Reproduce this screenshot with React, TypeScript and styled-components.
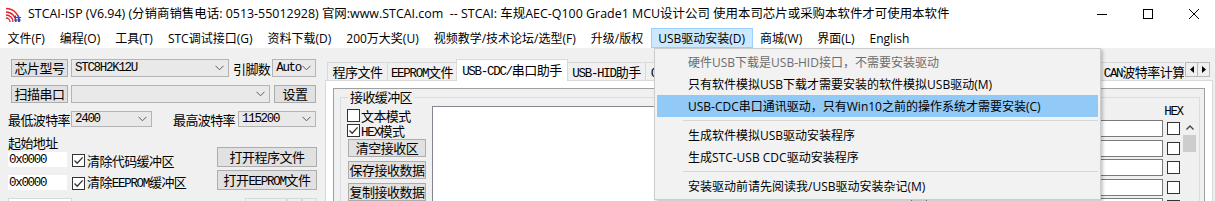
import * as React from "react";
import styled, { createGlobalStyle } from "styled-components";

const UI_FONT = `"Open Sans", "Noto Sans CJK SC", sans-serif`;
const CJK_FONT = `"Noto Sans CJK SC", sans-serif`;
const MONO_FONT = `"Liberation Mono", "Noto Sans CJK SC", monospace`;

const GlobalStyle = createGlobalStyle`
	html, body {
		margin: 0;
		padding: 0;
		background: #f0f0f0;
	}

	body {
		font-family: ${UI_FONT};
		font-size: 12px;
		color: #000;
	}

	* {
		box-sizing: border-box;
	}
`;

const Window = styled.div`
	position: relative;
	width: 1215px;
	height: 201px;
	overflow: hidden;
	display: flex;
	flex-direction: column;
	background: #f0f0f0;
`;

/* ---------- title bar ---------- */

const TitleBar = styled.div`
	flex: none;
	height: 28px;
	display: flex;
	align-items: center;
	background: #fff;
`;

const AppIcon = styled.svg`
	flex: none;
	margin-left: 6px;
	width: 15px;
	height: 15px;
`;

const TitleText = styled.div`
	flex: 1;
	margin-left: 7px;
	white-space: pre;
	font-size: 12.45px;
	line-height: 16px;
`;

const WinControls = styled.div`
	display: flex;
	height: 100%;
	margin-right: -2px;
`;

const WinButton = styled.div`
	width: 46px;
	display: flex;
	align-items: center;
	justify-content: center;
`;

/* ---------- menu bar ---------- */

const MenuBar = styled.div`
	flex: none;
	height: 20px;
	display: flex;
	background: #fff;
`;

const MenuBarItem = styled.div<{ $active?: boolean }>`
	display: flex;
	align-items: center;
	padding: 0 6.5px;
	border: 1px solid ${(p) => (p.$active ? "#99d1ff" : "transparent")};
	background: ${(p) => (p.$active ? "#cce8ff" : "transparent")};
	white-space: nowrap;
	font-size: 12px;
`;

/* ---------- body ---------- */

const Body = styled.div`
	flex: 1;
	display: flex;
	min-height: 0;
`;

const LeftPanel = styled.div`
	width: 325px;
	flex: none;
	display: flex;
	flex-direction: column;
	padding-top: 11px;
`;

const Row = styled.div<{ $h: number; $top: number; $left?: number; $bottom?: boolean }>`
	display: flex;
	align-items: ${(p) => (p.$bottom ? "flex-end" : "center")};
	flex: none;
	width: 317px;
	height: ${(p) => p.$h}px;
	margin-top: ${(p) => p.$top}px;
	padding-left: ${(p) => p.$left ?? 8}px;
`;

const PushButton = styled.div<{ $w: number; $h?: number; $ml?: number; $mt?: number; $push?: boolean }>`
	flex: none;
	width: ${(p) => p.$w}px;
	height: ${(p) => p.$h ?? 18}px;
	margin-left: ${(p) => (p.$push ? "auto" : `${p.$ml ?? 0}px`)};
	margin-top: ${(p) => p.$mt ?? 0}px;
	border: 1px solid #adadad;
	background: #e1e1e1;
	font-family: ${CJK_FONT};
	font-size: 13px;
	letter-spacing: -0.5px;
	line-height: ${(p) => (p.$h ?? 18) - 2}px;
	text-align: center;
	white-space: nowrap;
	overflow: hidden;
`;

const Combo = styled.div<{ $w: number; $h?: number; $ml?: number }>`
	flex: none;
	width: ${(p) => p.$w}px;
	height: ${(p) => p.$h ?? 18}px;
	margin-left: ${(p) => p.$ml ?? 0}px;
	display: flex;
	align-items: center;
	justify-content: space-between;
	padding: 0 4px 0 3px;
	border: 1px solid #b4b4b4;
	background: #e9e9e9;
`;

const Mono = styled.span`
	font-family: ${MONO_FONT};
	font-size: 12.5px;
	letter-spacing: -1.3px;
	white-space: pre;
`;

const FieldLabel = styled.span<{ $w?: number; $ml?: number }>`
	flex: none;
	width: ${(p) => (p.$w ? `${p.$w}px` : "auto")};
	margin-left: ${(p) => p.$ml ?? 0}px;
	font-family: ${CJK_FONT};
	font-size: 13px;
	letter-spacing: -0.6px;
	white-space: nowrap;
	line-height: 1;
`;

const AddrInput = styled.div`
	flex: none;
	width: 59px;
	height: 15px;
	display: flex;
	align-items: center;
	padding-left: 1px;
	background: #fff;
`;

const CheckBox = styled.span<{ $ml?: number }>`
	flex: none;
	width: 13px;
	height: 13px;
	margin-left: ${(p) => p.$ml ?? 0}px;
	display: inline-flex;
	align-items: center;
	justify-content: center;
	border: 1px solid #333;
	background: #fff;
`;

const LowerTab = styled.div<{ $w: number; $ml?: number; $white?: boolean }>`
	flex: none;
	align-self: flex-start;
	width: ${(p) => p.$w}px;
	height: 14px;
	margin-left: ${(p) => p.$ml ?? 0}px;
	padding-top: 2px;
	border: 1px solid #d9d9d9;
	border-bottom: none;
	background: ${(p) => (p.$white ? "#fff" : "#f0f0f0")};
	font-family: ${CJK_FONT};
	font-size: 13px;
	text-align: center;
`;

/* ---------- tab area ---------- */

const TabArea = styled.div`
	flex: 1;
	display: flex;
	flex-direction: column;
	margin-right: 2px;
	padding-top: 11px;
	min-width: 0;
`;

const TabStrip = styled.div`
	flex: none;
	position: relative;
	z-index: 1;
	height: 22px;
	margin-bottom: -1px;
	display: flex;
	padding-left: 2px;
`;

const TabList = styled.div`
	flex: 1;
	min-width: 0;
	display: flex;
	align-items: flex-end;
	overflow: hidden;
`;

const Tab = styled.div<{ $w: number; $active?: boolean }>`
	flex: none;
	position: relative;
	z-index: ${(p) => (p.$active ? 2 : 1)};
	width: ${(p) => p.$w}px;
	height: ${(p) => (p.$active ? 22 : 19)}px;
	margin-left: ${(p) => (p.$active ? -1 : 0)}px;
	display: flex;
	align-items: center;
	justify-content: center;
	padding-bottom: ${(p) => (p.$active ? 3 : 0)}px;
	border: 1px solid #d9d9d9;
	border-left-width: ${(p) => (p.$active ? 1 : 0)}px;
	border-bottom: ${(p) => (p.$active ? "none" : "1px solid #d9d9d9")};
	background: ${(p) => (p.$active ? "#fff" : "#f0f0f0")};
	font-family: ${CJK_FONT};
	font-size: 13px;
	letter-spacing: -0.5px;
	white-space: nowrap;
	overflow: hidden;

	&:first-child {
		border-left-width: 1px;
	}
`;

const TabScroll = styled.div`
	flex: none;
	align-self: flex-start;
	display: flex;
	margin: 3px 3px 0 1px;
`;

const ScrollArrow = styled.div`
	width: 13px;
	height: 15px;
	display: flex;
	align-items: center;
	justify-content: center;
	border: 1px solid #b8b8b8;
	background: #f0f0f0;

	& + & {
		margin-left: -1px;
	}
`;

const TabPage = styled.div`
	flex: 1;
	min-height: 0;
	display: flex;
	flex-direction: column;
	padding: 7px 7px 0 7px;
	border: 1px solid #d9d9d9;
	border-bottom: none;
	background: #fff;
`;

const InnerPanel = styled.div`
	flex: 1;
	display: flex;
	flex-direction: column;
	padding: 1px 4px 0 6px;
	border: 1px solid #a0a0a0;
	border-bottom: none;
	background: #f0f0f0;
`;

const GroupBox = styled.fieldset`
	flex: 1;
	margin: 0;
	min-width: 0;
	padding: 0 3px 0 6px;
	border: 1px solid #dcdcdc;
	border-bottom: none;
	display: flex;

	legend {
		margin-left: 1px;
		padding: 0 2px;
		font-family: ${CJK_FONT};
		font-size: 13px;
		letter-spacing: -0.6px;
		line-height: 14px;
	}
`;

const RecvColumn = styled.div`
	flex: none;
	width: 80px;
	display: flex;
	flex-direction: column;
	padding-top: 4px;
`;

const CheckRow = styled.div`
	height: 15px;
	display: flex;
	align-items: center;
	gap: 1px;
	font-family: ${CJK_FONT};
	font-size: 13px;
	letter-spacing: -0.6px;
	white-space: nowrap;
`;

const RecvArea = styled.div`
	flex: 1;
	margin: 2px 0 0 5px;
	border: 1px solid #828790;
	border-bottom: none;
	background: #fff;
`;

const SendColumn = styled.div`
	flex: none;
	width: 270px;
	margin-left: 14px;
	display: flex;
`;

const SendInputs = styled.div`
	flex: 1;
	display: flex;
	flex-direction: column;
	gap: 2.5px;
	padding-top: 16px;
`;

const SendInput = styled.div`
	flex: none;
	height: 17px;
	border: 1px solid #7a7a7a;
	background: #fff;
`;

const HexColumn = styled.div`
	flex: none;
	width: 13px;
	margin-left: 4px;
	display: flex;
	flex-direction: column;
	align-items: center;
	gap: 6.5px;
`;

const HexHead = styled.div`
	height: 16px;
	margin-bottom: -4.5px;
	display: flex;
	align-items: center;
	font-family: ${MONO_FONT};
	font-size: 12.5px;
	letter-spacing: -1.4px;
`;

const ScrollBar = styled.div`
	flex: none;
	width: 13px;
	margin: 16px 0 0 3px;
	display: flex;
	flex-direction: column;
	align-items: center;
	background: #f0f0f0;
`;

const ScrollUp = styled.div`
	height: 15px;
	display: flex;
	align-items: center;
	justify-content: center;
`;

const ScrollThumb = styled.div`
	width: 13px;
	height: 17px;
	background: #cdcdcd;
`;

/* ---------- dropdown menu ---------- */

const Dropdown = styled.div`
	position: absolute;
	left: 654px;
	top: 48px;
	z-index: 10;
	width: 447px;
	padding: 2px;
	border: 1px solid #cccccc;
	background: #f2f2f2;
	box-shadow: 2px 2px 3px rgba(0, 0, 0, 0.22);
`;

const DropItem = styled.div<{ $hot?: boolean; $disabled?: boolean }>`
	height: 22px;
	display: flex;
	align-items: center;
	padding-left: 31px;
	background: ${(p) => (p.$hot ? "#91c9f7" : "transparent")};
	color: ${(p) => (p.$disabled ? "#6d6d6d" : "#000")};
	white-space: nowrap;
	font-size: 12px;
`;

const DropSeparator = styled.div`
	height: 7px;
	display: flex;
	align-items: center;
	padding-left: 26px;

	&::after {
		content: "";
		flex: 1;
		height: 1px;
		background: #d7d7d7;
	}
`;

/* ---------- small drawings ---------- */

const Chevron = () => (
	<svg width="9" height="6" viewBox="0 0 9 6">
		<path d="M0.5 0.8 L4.5 4.8 L8.5 0.8" fill="none" stroke="#5a5a5a" strokeWidth="1" />
	</svg>
);

const Tick = () => (
	<svg width="11" height="11" viewBox="0 0 11 11">
		<path d="M1.5 5.5 L4.2 8.2 L9.6 2.4" fill="none" stroke="#333" strokeWidth="1.3" />
	</svg>
);

const Box = ({ checked, ml }: { checked?: boolean; ml?: number }) => (
	<CheckBox $ml={ml}>{checked ? <Tick /> : null}</CheckBox>
);

const menuBarItems = [
	"文件(F)",
	"编程(O)",
	"工具(T)",
	"STC调试接口(G)",
	"资料下载(D)",
	"200万大奖(U)",
	"视频教学/技术论坛/选型(F)",
	"升级/版权",
	"USB驱动安装(D)",
	"商城(W)",
	"界面(L)",
	"English",
];

// tabs hidden behind the open menu are kept as empty boxes
const tabs: { label?: React.ReactNode; w: number; active?: boolean }[] = [
	{ label: "程序文件", w: 61 },
	{ label: <><Mono>EEPROM</Mono>文件</>, w: 69 },
	{ label: <><Mono>USB-CDC/</Mono>串口助手</>, w: 112, active: true },
	{ label: <><Mono>USB-HID</Mono>助手</>, w: 78 },
	{ label: <><Mono>CAN-ISP</Mono>下载</>, w: 79 },
	{ w: 88 },
	{ w: 66 },
	{ w: 100 },
	{ w: 122 },
	{ label: <><Mono>CAN</Mono>波特率计算器</>, w: 100 },
];

const App = (): JSX.Element => (
	<Window>
		<GlobalStyle />
		<TitleBar>
			<AppIcon viewBox="0 0 15 15">
				<path d="M10 15 A10 10 0 0 0 0 5" fill="none" stroke="#e5232c" strokeWidth="1.4" />
				<path d="M7 15 A7 7 0 0 0 0 8" fill="none" stroke="#e5232c" strokeWidth="1.4" />
				<path d="M13.5 15 A13.5 13.5 0 0 0 0 1.5" fill="none" stroke="#e5232c" strokeWidth="1.4" />
				<path d="M4 15 A4 4 0 0 0 0 11" fill="none" stroke="#e5232c" strokeWidth="1.4" />
				<path d="M8 10.5 H15 M8 13 H15 M9.5 8.5 V15 M12.5 8.5 V15" stroke="#2b4fc6" strokeWidth="1.2" />
			</AppIcon>
			<TitleText>
				{"STCAI-ISP (V6.94) (分销商销售电话: 0513-55012928) 官网:www.STCAI.com  -- STCAI: 车规AEC-Q100 Grade1 MCU设计公司 使用本司芯片或采购本软件才可使用本软件"}
			</TitleText>
			<WinControls>
				<WinButton>
					<svg width="10" height="10" viewBox="0 0 10 10">
						<path d="M0 5.5 H10" stroke="#000" strokeWidth="1" />
					</svg>
				</WinButton>
				<WinButton>
					<svg width="10" height="10" viewBox="0 0 10 10">
						<rect x="0.5" y="0.5" width="9" height="9" fill="none" stroke="#000" strokeWidth="1" />
					</svg>
				</WinButton>
				<WinButton>
					<svg width="10" height="10" viewBox="0 0 10 10">
						<path d="M0 0 L10 10 M10 0 L0 10" stroke="#000" strokeWidth="1" />
					</svg>
				</WinButton>
			</WinControls>
		</TitleBar>

		<MenuBar>
			{menuBarItems.map((item) => (
				<MenuBarItem key={item} $active={item === "USB驱动安装(D)"}>
					{item}
				</MenuBarItem>
			))}
		</MenuBar>

		<Body>
			<LeftPanel>
				<Row $h={18} $top={0} $left={11}>
					<PushButton $w={57}>芯片型号</PushButton>
					<Combo $w={158} $ml={3}>
						<Mono>STC8H2K12U</Mono>
						<Chevron />
					</Combo>
					<FieldLabel $ml={4}>引脚数</FieldLabel>
					<Combo $w={44} $ml={2}>
						<Mono>Auto</Mono>
						<Chevron />
					</Combo>
				</Row>
				<Row $h={18} $top={8} $left={11}>
					<PushButton $w={57}>扫描串口</PushButton>
					<Combo $w={199} $ml={3}>
						<span />
						<Chevron />
					</Combo>
					<PushButton $w={42} $ml={4}>设置</PushButton>
				</Row>
				<Row $h={16} $top={8}>
					<FieldLabel $w={63}>最低波特率</FieldLabel>
					<Combo $w={81} $h={16}>
						<Mono>2400</Mono>
						<Chevron />
					</Combo>
					<FieldLabel $w={65} $ml={21}>最高波特率</FieldLabel>
					<Combo $w={78} $h={16}>
						<Mono>115200</Mono>
						<Chevron />
					</Combo>
				</Row>
				<Row $h={14} $top={8}>
					<FieldLabel>起始地址</FieldLabel>
				</Row>
				<Row $h={20} $top={-2} $bottom>
					<AddrInput>
						<Mono>0x0000</Mono>
					</AddrInput>
					<Box checked ml={5} />
					<FieldLabel $ml={2}>清除代码缓冲区</FieldLabel>
					<PushButton $w={100} $h={20} $push>
						打开程序文件
					</PushButton>
				</Row>
				<Row $h={20} $top={3} $bottom>
					<AddrInput>
						<Mono>0x0000</Mono>
					</AddrInput>
					<Box checked ml={5} />
					<FieldLabel $ml={2}>
						清除<Mono>EEPROM</Mono>缓冲区
					</FieldLabel>
					<PushButton $w={100} $h={20} $push>
						打开<Mono>EEPROM</Mono>文件
					</PushButton>
				</Row>
				<Row $h={14} $top={8}>
					<LowerTab $w={64} $white>
						硬件选项
					</LowerTab>
					<LowerTab $w={42} $ml={173}>
						脱机
					</LowerTab>
					<LowerTab $w={15}> </LowerTab>
					<LowerTab $w={15}> </LowerTab>
				</Row>
			</LeftPanel>

			<TabArea>
				<TabStrip>
					<TabList>
						{tabs.map((t, i) => (
							<Tab key={i} $w={t.w} $active={t.active}>
								<span>{t.label}</span>
							</Tab>
						))}
					</TabList>
					<TabScroll>
						<ScrollArrow>
							<svg width="4" height="7" viewBox="0 0 4 7">
								<path d="M4 0 L0 3.5 L4 7 Z" fill="#000" />
							</svg>
						</ScrollArrow>
						<ScrollArrow>
							<svg width="4" height="7" viewBox="0 0 4 7">
								<path d="M0 0 L4 3.5 L0 7 Z" fill="#000" />
							</svg>
						</ScrollArrow>
					</TabScroll>
				</TabStrip>
				<TabPage>
					<InnerPanel>
						<GroupBox>
							<legend>接收缓冲区</legend>
							<RecvColumn>
								<CheckRow>
									<Box />
									文本模式
								</CheckRow>
								<CheckRow>
									<Box checked />
									<span>
										<Mono>HEX</Mono>模式
									</span>
								</CheckRow>
								<PushButton $w={78} $ml={1} $mt={1}>
									清空接收区
								</PushButton>
								<PushButton $w={78} $ml={1} $mt={4}>
									保存接收数据
								</PushButton>
								<PushButton $w={78} $ml={1} $mt={4}>
									复制接收数据
								</PushButton>
							</RecvColumn>
							<RecvArea />
							<SendColumn>
								<SendInputs>
									{[0, 1, 2, 3, 4].map((n) => (
										<SendInput key={n} />
									))}
								</SendInputs>
								<HexColumn>
									<HexHead>HEX</HexHead>
									{[0, 1, 2, 3, 4].map((n) => (
										<Box key={n} />
									))}
								</HexColumn>
								<ScrollBar>
									<ScrollUp>
										<svg width="8" height="5" viewBox="0 0 8 5">
											<path d="M0.5 4.5 L4 1 L7.5 4.5" fill="none" stroke="#444" strokeWidth="1.4" />
										</svg>
									</ScrollUp>
									<ScrollThumb />
								</ScrollBar>
							</SendColumn>
						</GroupBox>
					</InnerPanel>
				</TabPage>
			</TabArea>
		</Body>

		<Dropdown>
			<DropItem $disabled>硬件USB下载是USB-HID接口，不需要安装驱动</DropItem>
			<DropItem>只有软件模拟USB下载才需要安装的软件模拟USB驱动(M)</DropItem>
			<DropItem $hot>USB-CDC串口通讯驱动，只有Win10之前的操作系统才需要安装(C)</DropItem>
			<DropSeparator />
			<DropItem>生成软件模拟USB驱动安装程序</DropItem>
			<DropItem>生成STC-USB CDC驱动安装程序</DropItem>
			<DropSeparator />
			<DropItem>安装驱动前请先阅读我/USB驱动安装杂记(M)</DropItem>
		</Dropdown>
	</Window>
);

export default App;
